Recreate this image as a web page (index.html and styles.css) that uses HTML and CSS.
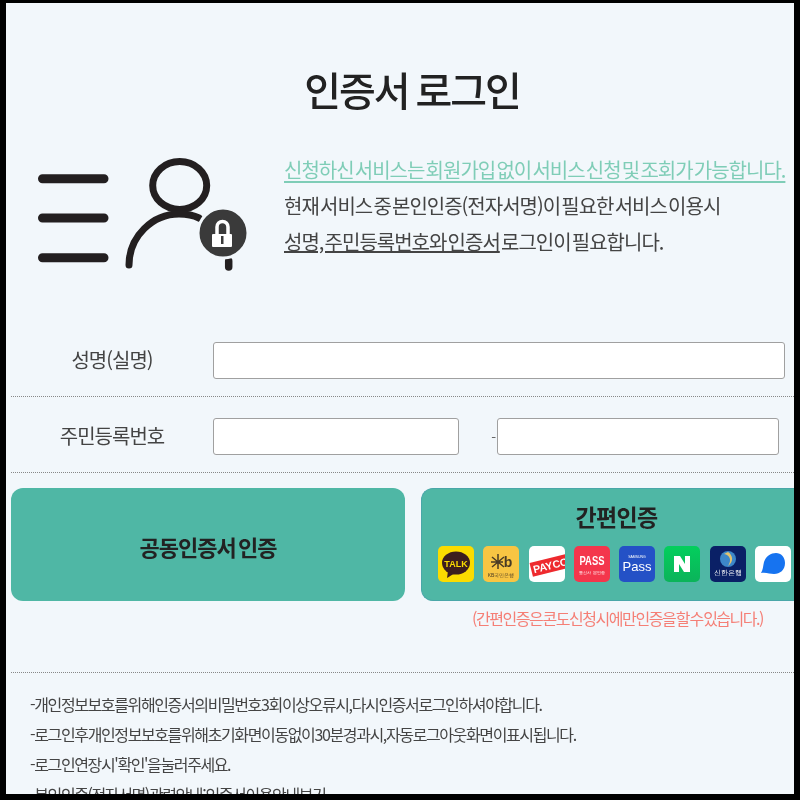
FILE: index.html
```html
<!DOCTYPE html>
<html lang="ko">
<head>
<meta charset="utf-8">
<title>인증서 로그인</title>
<link rel="stylesheet" href="styles.css">
</head>
<body>
<main class="panel">
  <h1 class="title">인증서 로그인</h1>
  <section class="intro">
    <svg class="hero-icon" width="220" height="116" viewBox="0 0 220 116">
      <g fill="none" stroke="#231f20" stroke-linecap="round">
        <path d="M9.500 20.700H71M9.500 60H71M9.500 99.700H71" stroke-width="9"/>
        <ellipse cx="146.700" cy="27.500" rx="27" ry="24" stroke-width="7"/>
        <path d="M96 107C96 78 120 56 146 56C152 56 160 57 166 60" stroke-width="7"/>
        <path d="M195.700 103V109" stroke-width="7.500"/>
      </g>
      <circle cx="190" cy="75" r="25" fill="#3a3a3a" stroke="#f2f7fb" stroke-width="3"/>
      <path d="M184 77V69a5.500 5.500 0 0 1 11 0V77" fill="none" stroke="#fff" stroke-width="3.500"/>
      <rect x="179" y="76" width="20" height="13" rx="1" fill="#fff"/>
      <rect x="188" y="78" width="2.500" height="8" fill="#3a3a3a"/>
    </svg>
    <div class="intro-text">
      <p class="intro-line accent">신청하신 서비스는 회원가입 없이 서비스 신청 및 조회가 가능합니다.</p>
      <p class="intro-line">현재 서비스 중 본인인증(전자서명)이 필요한 서비스 이용시</p>
      <p class="intro-line"><u>성명, 주민등록번호와 인증서</u> 로그인이 필요합니다.</p>
    </div>
  </section>
  <form class="form">
    <div class="row">
      <label class="row-label">성명(실명)</label>
      <input class="field field-full" type="text">
    </div>
    <div class="row">
      <label class="row-label">주민등록번호</label>
      <input class="field field-a" type="text">
      <span class="dash">-</span>
      <input class="field field-b" type="password">
    </div>
  </form>
  <section class="auth">
    <div class="auth-left">
      <button class="btn-cert" type="button">공동인증서 인증</button>
    </div>
    <div class="auth-right">
      <div class="btn-easy">
        <div class="easy-title">간편인증</div>
        <div class="easy-icons">
          <svg class="app" viewBox="0 0 36 36"><rect width="36" height="36" rx="5" fill="#fbdc00"/><ellipse cx="18" cy="17" rx="14" ry="11.500" fill="#3c1e1e"/><path d="M10 25L9 32L17 27Z" fill="#3c1e1e"/><text x="18" y="20.500" class="t-talk">TALK</text></svg>
          <svg class="app" viewBox="0 0 36 36"><rect width="36" height="36" rx="5" fill="#f8c543"/><path d="M15 8V23M9 11L21 21M21 11L9 21M8 16H20" stroke="#4a3b24" stroke-width="1.500"/><text x="25" y="21" class="t-kb">b</text><text x="18" y="31" class="t-tiny">KB국민은행</text></svg>
          <svg class="app" viewBox="0 0 36 36"><rect width="36" height="36" rx="5" fill="#fff"/><g transform="rotate(-14 18 21)"><rect x="2" y="13" width="40" height="14" fill="#ee2a2e"/><text x="4" y="24" class="t-payco">PAYCO</text></g></svg>
          <svg class="app" viewBox="0 0 36 36"><rect width="36" height="36" rx="5" fill="#f4364c"/><text x="18" y="19" class="t-pass" textLength="25" lengthAdjust="spacingAndGlyphs">PASS</text><text x="18" y="28" class="t-tiny-p">통신사 본인증</text></svg>
          <svg class="app" viewBox="0 0 36 36"><rect width="36" height="36" rx="5" fill="#2451c6"/><text x="18" y="12" class="t-tiny-w">SAMSUNG</text><text x="18" y="25" class="t-spass">Pass</text></svg>
          <svg class="app" viewBox="0 0 36 36"><defs><linearGradient id="ng" x1="0" y1="0" x2="0" y2="1"><stop offset="0" stop-color="#03cf5d"/><stop offset="1" stop-color="#0bb35a"/></linearGradient></defs><rect width="36" height="36" rx="5" fill="url(#ng)"/><path d="M10 10H16L21 18V10H26V26H20L15 18V26H10Z" fill="#fff"/></svg>
          <svg class="app" viewBox="0 0 36 36"><rect width="36" height="36" rx="5" fill="#0a2066"/><circle cx="18" cy="13" r="8" fill="#3d87c9"/><path d="M14 8C20 9 22 14 18 20C24 16 23 9 18 6Z" fill="#e3c36f"/><text x="18" y="29" class="t-tiny-b">신한은행</text></svg>
          <svg class="app" viewBox="0 0 36 36"><rect width="36" height="36" rx="5" fill="#fff"/><path d="M6 27C8 24 8 20 9 16C11 10 16 7 21 7C26 7 30 11 30 17C30 24 25 28 19 28C15 28 11 26 6 27Z" fill="#1673f0"/></svg>
        </div>
      </div>
      <p class="easy-note">(간편인증은 콘도신청시에만 인증을 할 수 있습니다.)</p>
    </div>
  </section>
  <ul class="notes">
    <li>- 개인정보보호를 위해 인증서의 비밀번호 3회 이상 오류시, 다시 인증서 로그인 하셔야 합니다.</li>
    <li>- 로그인 후 개인정보보호를 위해 초기화면 이동없이 30분 경과시, 자동 로그아웃 화면이 표시됩니다.</li>
    <li>- 로그인 연장시 '확인'을 눌러주세요.</li>
    <li>- 본인인증(전자서명) 관련안내 : 인증서 이용안내 보기</li>
  </ul>
</main>
</body>
</html>
```

FILE: styles.css
```css
* { box-sizing: border-box; }
html, body { margin: 0; height: 800px; overflow: hidden; }
body {
  background: #000;
  padding: 3px 6px 6px 6px;
  font-family: "Noto Sans CJK KR", "Noto Sans", sans-serif;
  color: #333;
}
.panel {
  height: 791px;
  background: #f2f7fb;
  overflow: hidden;
  padding-left: 5px;
  filter: blur(0.4px);
}
.title {
  margin: 0;
  padding: 58px 0 0 19px;
  height: 150px;
  text-align: center;
  font-size: 40px;
  line-height: 56px;
  font-weight: 500;
  letter-spacing: -2.100px;
  word-spacing: -2px;
  color: #222;
}
.intro {
  display: flex;
  height: 187px;
}
.hero-icon { margin: 5px 0 0 22px; flex: none; }
.intro-text { margin: -1px 0 0 31px; white-space: nowrap; }
.intro-line {
  margin: 0;
  height: 36px;
  font-size: 20px;
  line-height: 36px;
  letter-spacing: -1px;
  word-spacing: -3.400px;
  color: #444;
}
.accent {
  color: #7fcdb7;
  text-decoration: underline;
  text-underline-offset: 3px;
}
.form { margin: 0; }
.row {
  display: flex;
  align-items: center;
  height: 76px;
  padding: 21px 0 17px;
  border-bottom: 1px dotted #888;
}
.row:first-child { height: 57px; padding: 2px 0 17px; }
.row-label {
  width: 202px;
  flex: none;
  text-align: center;
  font-size: 20px;
  line-height: 30px;
  letter-spacing: -1px;
  color: #444;
  padding-bottom: 2px;
}
.field {
  height: 37px;
  background: #fff;
  border: 1.500px solid #a0a0a0;
  border-radius: 3px;
  padding: 0;
  outline: none;
}
.field-full { width: 572px; }
.field-a { width: 246px; }
.field-b { width: 282px; }
.dash {
  flex: 0 0 38px;
  text-align: right;
  padding-right: 1px;
  color: #666;
  font-size: 14px;
}
.auth {
  display: flex;
  gap: 16px;
  padding-top: 15px;
  height: 200px;
  border-bottom: 1px dotted #888;
}
.auth-left { width: 394px; flex: none; }
.btn-cert {
  display: block;
  width: 100%;
  height: 113px;
  border: 0;
  border-radius: 12px;
  background: #4fb7a5;
  font-family: inherit;
  font-size: 22px;
  font-weight: 700;
  letter-spacing: -1px;
  word-spacing: -3px;
  color: #222;
  padding: 3px 0 0;
}
.auth-right { width: 379px; flex: none; }
.btn-easy {
  height: 113px;
  border-radius: 12px 0 0 12px;
  background: #4fb7a5;
  border: 1px solid #4aa7a8;
  border-right: 0;
  padding-top: 9px;
}
.easy-title {
  text-align: center;
  font-size: 23px;
  line-height: 36px;
  font-weight: 700;
  letter-spacing: -0.700px;
  color: #222;
  padding-left: 11px;
}
.easy-icons {
  display: flex;
  gap: 9.300px;
  margin: 12px 0 0 16px;
}
.app { width: 36px; height: 36px; flex: none; display: block; }
.app text { text-anchor: middle; font-family: "Liberation Sans", sans-serif; }
.t-talk { font-size: 9px; font-weight: 700; fill: #fbdc00; }
.t-kb { font-size: 14px; font-weight: 700; fill: #4a3b24; }
.t-tiny { font-size: 5px; fill: #4a3b24; }
.app .t-payco { text-anchor: start; font-size: 10.500px; font-weight: 700; fill: #fff; }
.t-pass { font-size: 13px; font-weight: 700; fill: #fff; }
.t-tiny-p { font-size: 4px; fill: #fff; }
.t-tiny-w { font-size: 3.500px; fill: #fff; }
.t-spass { font-size: 13px; font-weight: 400; fill: #fff; }
.t-tiny-b { font-size: 6.500px; fill: #fff; }
.easy-note {
  margin: 2px 0 0;
  padding-left: 14px;
  text-align: center;
  font-size: 16px;
  line-height: 30px;
  letter-spacing: -1.500px;
  word-spacing: -2.500px;
  color: #f57f76;
  white-space: nowrap;
}
.notes {
  margin: 0;
  padding: 16px 0 0 19px;
  list-style: none;
  white-space: nowrap;
}
.notes li {
  height: 30px;
  font-size: 16px;
  line-height: 30px;
  letter-spacing: -1.400px;
  word-spacing: -3px;
  color: #444;
}
```
